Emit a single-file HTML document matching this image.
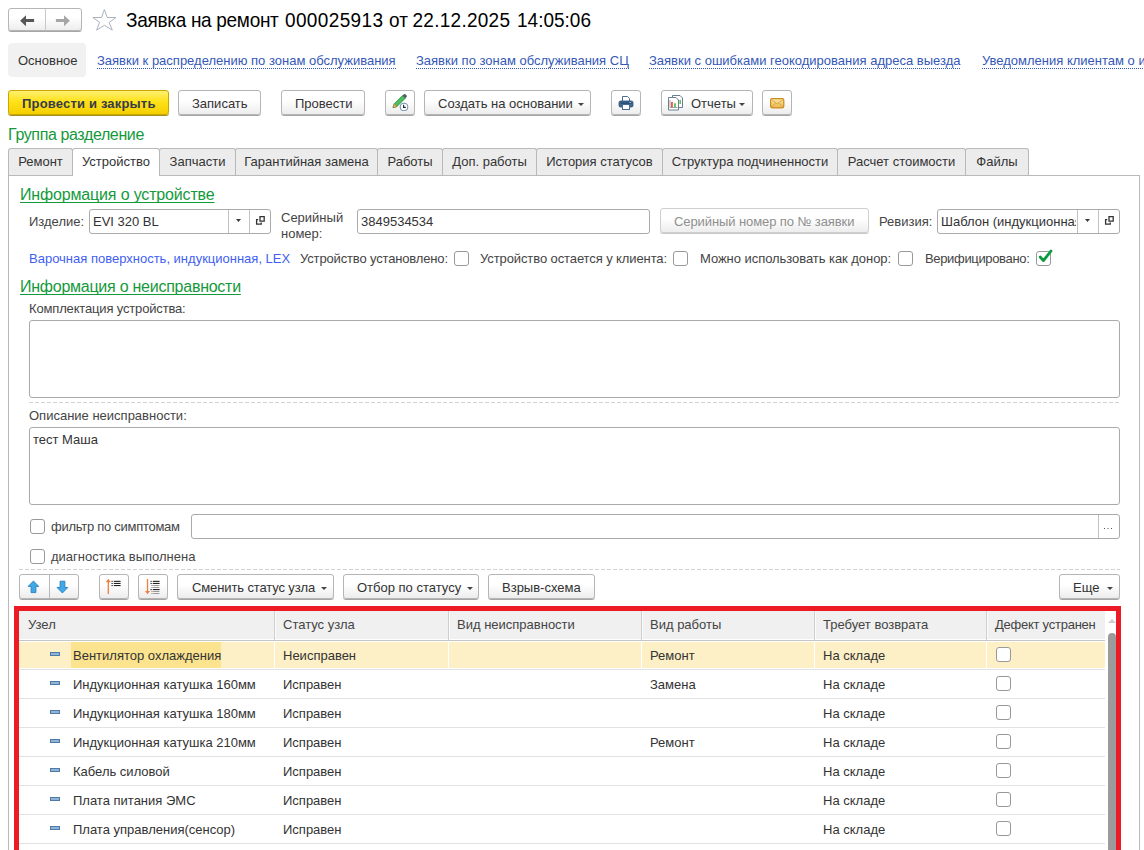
<!DOCTYPE html>
<html><head><meta charset="utf-8">
<style>
*{box-sizing:border-box;margin:0;padding:0}
html,body{width:1144px;height:850px;overflow:hidden;background:#fff}
body{position:relative;font-family:"Liberation Sans",sans-serif;font-size:13px;color:#333}
.a{position:absolute}
.t{position:absolute;white-space:nowrap;line-height:16px}
.btn{position:absolute;height:25px;border:1px solid #b5b5b5;border-radius:3px;background:linear-gradient(#fff 0%,#fff 40%,#ededed 100%);box-shadow:0 1px 0 #a6a6a6}
.lnk{position:absolute;white-space:nowrap;line-height:16px;color:#3558b8;background-image:linear-gradient(to right,#3558b8 50%,transparent 50%);background-size:2px 1px;background-repeat:repeat-x;background-position:0 15px}
.tab{position:absolute;top:148px;height:27px;border:1px solid #b9b9b9;border-bottom:none;background:#ececec;border-radius:3px 3px 0 0;text-align:center;line-height:25px;color:#333;white-space:nowrap}
.tab.on{background:#fff;height:28px;z-index:2}
.inp{position:absolute;border:1px solid #aaa;border-radius:3px;background:#fff;height:25px}
.cb{position:absolute;width:15px;height:15px;border:1px solid #999;border-radius:3px;background:#fff}
.grn{color:#14993b}
.dd{position:absolute;width:0;height:0;border-left:3px solid transparent;border-right:3px solid transparent;border-top:3px solid #444}
.dash{position:absolute;height:1px;background-image:linear-gradient(to right,#d2d2d2 66%,transparent 66%);background-size:6px 1px}
.vl{position:absolute;width:1px;background:#c2c2c2}
</style></head><body>
<div class="btn" style="left:8px;top:8px;width:74px;height:23px"></div>
<div class="vl" style="left:45px;top:9px;height:22px;background:#c8c8c8"></div>
<svg class="a" style="left:19px;top:14px" width="16" height="14" viewBox="0 0 16 14"><path d="M1.1 6.75 L7 1.3 L7 4.9 L15.1 4.9 L15.1 7.9 L7 7.9 L7 12.2 Z" fill="#565656"/></svg>
<svg class="a" style="left:55px;top:14px" width="16" height="14" viewBox="0 0 16 14"><path d="M14.9 6.75 L9 1.3 L9 4.9 L0.9 4.9 L0.9 7.9 L9 7.9 L9 12.2 Z" fill="#a6a6a6"/></svg>
<svg class="a" style="left:92px;top:9px" width="26" height="24" viewBox="0 0 26 24"><path d="M12.4 0.6 L15.3 8.5 L23.9 8.5 L17.2 13.4 L20.3 21.2 L12.4 16.3 L4.6 21.2 L7.6 13.4 L0.9 8.5 L9.5 8.5 Z" fill="none" stroke="#aab3bd" stroke-width="1"/></svg>
<div class="t" style="left:126px;top:10px;font-size:19px;line-height:22px;color:#000;letter-spacing:-0.3px;transform:scaleY(1.07);transform-origin:0 17px">Заявка на ремонт</div>
<div class="t" style="left:285px;top:10px;font-size:19px;line-height:22px;color:#000;letter-spacing:0.37px;transform:scaleY(1.07);transform-origin:0 17px">000025913</div>
<div class="t" style="left:389px;top:10px;font-size:19px;line-height:22px;color:#000;letter-spacing:0px;transform:scaleY(1.07);transform-origin:0 17px">от</div>
<div class="t" style="left:412.5px;top:10px;font-size:19px;line-height:22px;color:#000;letter-spacing:0.27px;transform:scaleY(1.07);transform-origin:0 17px">22.12.2025</div>
<div class="t" style="left:517px;top:10px;font-size:19px;line-height:22px;color:#000;letter-spacing:0px;transform:scaleY(1.07);transform-origin:0 17px">14:05:06</div>
<div class="a" style="left:8px;top:43px;width:78px;height:34px;background:#f1f1f1;border-radius:4px"></div>
<div class="t" style="left:18px;top:53px;color:#333;">Основное</div>
<div class="lnk" style="left:97px;top:53px">Заявки к распределению по зонам обслуживания</div>
<div class="lnk" style="left:416px;top:53px">Заявки по зонам обслуживания СЦ</div>
<div class="lnk" style="left:649px;top:53px">Заявки с ошибками геокодирования адреса выезда</div>
<div class="lnk" style="left:982px;top:53px">Уведомления клиентам о изменении статуса заявки</div>
<div class="btn" style="left:8px;top:90px;width:161px;border-color:#c9a800;background:linear-gradient(#fff070 0%,#ffe21a 45%,#f5cf00 100%);box-shadow:0 1px 0 #a89020"></div>
<div class="t" style="left:22px;top:96px;color:#363b4a;font-weight:bold;letter-spacing:0.18px">Провести и закрыть</div>
<div class="btn" style="left:178px;top:90px;width:83px;"></div>
<div class="t" style="left:192px;top:96px;color:#333;">Записать</div>
<div class="btn" style="left:281px;top:90px;width:84px;"></div>
<div class="t" style="left:295px;top:96px;color:#333;">Провести</div>
<div class="btn" style="left:385px;top:90px;width:30px;"></div>
<svg class="a" style="left:390px;top:93px" width="20" height="18" viewBox="0 0 20 18">
<path d="M3 14.6 L4.3 10.8 L12.6 2.5 L15.3 5.2 L7 13.5 Z" fill="#4cbf5e" stroke="#2f8a3c" stroke-width="0.8"/>
<path d="M12.6 2.5 L13.9 1.2 Q14.6 0.6 15.3 1.2 L16.6 2.5 Q17.2 3.2 16.6 3.9 L15.3 5.2 Z" fill="#4f5b66"/>
<path d="M3 14.6 L4.3 10.8 L7 13.5 Z" fill="#f2c46a" stroke="#8a6a2a" stroke-width="0.6"/>
<circle cx="14" cy="14" r="3.9" fill="#fff" stroke="#6d8fae" stroke-width="1"/>
<path d="M13.6 11.8 V14.4 H15.8" fill="none" stroke="#222" stroke-width="1.1"/>
</svg>
<div class="btn" style="left:424px;top:90px;width:167px;"></div>
<div class="t" style="left:438px;top:96px;color:#333;">Создать на основании</div>
<div class="dd" style="left:578px;top:103px;border-top-color:#444"></div>
<div class="btn" style="left:611px;top:90px;width:30px;"></div>
<svg class="a" style="left:618px;top:95px" width="16" height="16" viewBox="0 0 16 16">
<path d="M4.5 1.5 H9.5 L11.5 3.5 V7 H4.5 Z" fill="#fff" stroke="#4a6d8f" stroke-width="1"/>
<rect x="1" y="6" width="14" height="6" rx="1.5" fill="#3f6a95" stroke="#2d5076" stroke-width="0.8"/>
<rect x="2.5" y="7.6" width="11" height="1" fill="#1f3f60"/>
<rect x="4.5" y="9.5" width="7" height="5" fill="#fff" stroke="#4a6d8f" stroke-width="1"/>
<rect x="11.5" y="7" width="1.2" height="0.8" fill="#fff"/>
</svg>
<div class="btn" style="left:661px;top:90px;width:92px;"></div>
<div class="t" style="left:691px;top:96px;color:#333;">Отчеты</div>
<div class="dd" style="left:739px;top:103px;border-top-color:#444"></div>
<svg class="a" style="left:667px;top:94px" width="18" height="18" viewBox="0 0 18 18">
<path d="M5.5 1.5 H13 L15.5 4 V13.5 H5.5 Z" fill="#fff" stroke="#6a7f93" stroke-width="1"/>
<path d="M1.5 3.5 H9 L11.5 6 V16 H1.5 Z" fill="#fff" stroke="#6a7f93" stroke-width="1"/>
<path d="M3 6 V13.5 H10.5" fill="none" stroke="#666" stroke-width="0.6"/>
<rect x="4.2" y="8" width="1.5" height="5.3" fill="#e8321e"/>
<rect x="7.2" y="9.2" width="1.5" height="4.1" fill="#3db33a"/>
<rect x="12.5" y="6" width="1.3" height="4" fill="#3db33a"/>
</svg>
<div class="btn" style="left:762px;top:90px;width:30px;"></div>
<svg class="a" style="left:770px;top:98px" width="15" height="11" viewBox="0 0 15 11">
<defs><linearGradient id="mg" x1="0" y1="0" x2="0" y2="1"><stop offset="0" stop-color="#fde9a8"/><stop offset="1" stop-color="#eab649"/></linearGradient></defs>
<rect x="0.6" y="0.6" width="13.2" height="9.2" rx="1.5" fill="url(#mg)" stroke="#c98a1e" stroke-width="1.2"/>
<path d="M1.5 1.5 L7.2 6 L13 1.5 M1.5 9.2 L5.5 5.2 M13 9.2 L9 5.2" fill="none" stroke="#d39a3a" stroke-width="0.8"/>
</svg>
<div class="t grn" style="left:8px;top:126px;font-size:16px;line-height:18px;letter-spacing:-0.38px">Группа разделение</div>
<div class="a" style="left:8px;top:175px;width:1132px;height:700px;border:1px solid #b9b9b9"></div>
<div class="tab" style="left:8px;width:65px">Ремонт</div>
<div class="tab on" style="left:72px;width:88px">Устройство</div>
<div class="tab" style="left:159px;width:77px">Запчасти</div>
<div class="tab" style="left:235px;width:143px">Гарантийная замена</div>
<div class="tab" style="left:377px;width:66px">Работы</div>
<div class="tab" style="left:442px;width:95px">Доп. работы</div>
<div class="tab" style="left:536px;width:127px">История статусов</div>
<div class="tab" style="left:662px;width:176px">Структура подчиненности</div>
<div class="tab" style="left:837px;width:129px">Расчет стоимости</div>
<div class="tab" style="left:965px;width:64px">Файлы</div>
<div class="t grn" style="left:20px;top:186px;text-decoration:underline;text-decoration-skip-ink:none;text-underline-offset:2px;font-size:16px;line-height:18px;letter-spacing:-0.16px">Информация о устройстве</div>
<div class="t" style="left:29px;top:214px;color:#444;">Изделие:</div>
<div class="inp" style="left:89px;top:209px;width:182px"></div>
<div class="t" style="left:93px;top:214px;color:#333;width:135px;overflow:hidden">EVI 320 BL</div>
<div class="vl" style="left:228px;top:210px;height:23px"></div>
<div class="vl" style="left:249px;top:210px;height:23px"></div>
<svg class="a" style="left:235px;top:218px" width="7" height="5" viewBox="0 0 7 5"><path d="M1 1 H6 L3.5 4 Z" fill="#3a3a3a"/></svg>
<svg class="a" style="left:255px;top:215px" width="11" height="11" viewBox="0 0 11 11"><path d="M5 1.7 H9.2 V6.2 H5 Z M3.2 4.7 H1.6 V9.2 H6.2 V7.6" fill="none" stroke="#333" stroke-width="1.3"/></svg>
<div class="t" style="left:281px;top:210px;color:#444;">Серийный</div>
<div class="t" style="left:281px;top:226px;color:#444;">номер:</div>
<div class="inp" style="left:357px;top:209px;width:293px"></div>
<div class="t" style="left:361px;top:214px;color:#333;">3849534534</div>
<div class="btn" style="left:660px;top:208px;width:209px;border-color:#cfcfcf;box-shadow:0 1px 0 #c8c8c8"></div>
<div class="t" style="left:674px;top:214px;color:#8f8f8f;letter-spacing:-0.09px">Серийный номер по № заявки</div>
<div class="t" style="left:879px;top:214px;color:#444;">Ревизия:</div>
<div class="inp" style="left:937px;top:209px;width:183px"></div>
<div class="t" style="left:941px;top:214px;color:#333;width:135px;overflow:hidden">Шаблон (индукционная)</div>
<div class="vl" style="left:1077px;top:210px;height:23px"></div>
<div class="vl" style="left:1098px;top:210px;height:23px"></div>
<svg class="a" style="left:1084px;top:218px" width="7" height="5" viewBox="0 0 7 5"><path d="M1 1 H6 L3.5 4 Z" fill="#3a3a3a"/></svg>
<svg class="a" style="left:1104px;top:215px" width="11" height="11" viewBox="0 0 11 11"><path d="M5 1.7 H9.2 V6.2 H5 Z M3.2 4.7 H1.6 V9.2 H6.2 V7.6" fill="none" stroke="#333" stroke-width="1.3"/></svg>
<div class="t" style="left:29px;top:251px;color:#3f5ff0;">Варочная поверхность, индукционная, LEX</div>
<div class="t" style="left:300px;top:251px;color:#444;letter-spacing:-0.15px">Устройство установлено:</div>
<div class="cb" style="left:454px;top:251px"></div>
<div class="t" style="left:480px;top:251px;color:#444;letter-spacing:-0.1px">Устройство остается у клиента:</div>
<div class="cb" style="left:673px;top:251px"></div>
<div class="t" style="left:700px;top:251px;color:#444;letter-spacing:-0.05px">Можно использовать как донор:</div>
<div class="cb" style="left:898px;top:251px"></div>
<div class="t" style="left:925px;top:251px;color:#444;letter-spacing:-0.34px">Верифицировано:</div>
<div class="cb" style="left:1036px;top:251px"></div>
<svg class="a" style="left:1036px;top:247px" width="18" height="18" viewBox="0 0 18 18"><path d="M4.2 10 L7.4 13.6 L15 4" fill="none" stroke="#0c9a3c" stroke-width="2.8" stroke-linecap="round" stroke-linejoin="round"/></svg>
<div class="t grn" style="left:20px;top:278px;text-decoration:underline;text-decoration-skip-ink:none;text-underline-offset:2px;font-size:16px;line-height:18px;letter-spacing:-0.25px">Информация о неисправности</div>
<div class="t" style="left:29px;top:301px;color:#444;letter-spacing:-0.16px">Комплектация устройства:</div>
<div class="inp" style="left:29px;top:320px;width:1091px;height:78px"></div>
<div class="dash" style="left:29px;top:402px;width:1091px"></div>
<div class="t" style="left:29px;top:408px;color:#444;">Описание неисправности:</div>
<div class="inp" style="left:29px;top:427px;width:1091px;height:78px"></div>
<div class="t" style="left:33px;top:432px;color:#333;">тест Маша</div>
<div class="cb" style="left:30px;top:519px"></div>
<div class="t" style="left:51px;top:519px;color:#444;letter-spacing:-0.27px">фильтр по симптомам</div>
<div class="inp" style="left:191px;top:514px;width:929px"></div>
<div class="vl" style="left:1098px;top:515px;height:23px"></div>
<svg class="a" style="left:1104px;top:528px" width="10" height="3" viewBox="0 0 10 3"><rect x="0" y="0" width="1" height="1" fill="#555"/><rect x="3.5" y="0" width="1" height="1" fill="#555"/><rect x="7" y="0" width="1" height="1" fill="#555"/></svg>
<div class="cb" style="left:30px;top:549px"></div>
<div class="t" style="left:51px;top:549px;color:#444;">диагностика выполнена</div>
<div class="dash" style="left:19px;top:569px;width:1101px"></div>
<div class="btn" style="left:19px;top:574px;width:60px;"></div>
<div class="vl" style="left:49px;top:575px;height:24px;background:#b8b8b8"></div>
<svg class="a" style="left:27px;top:580px" width="13" height="14" viewBox="0 0 13 14"><path d="M6.4 1 L11.8 6.4 L8.9 6.4 L8.9 12.6 L4.1 12.6 L4.1 6.4 L1.1 6.4 Z" fill="#41a8e6" stroke="#2a7fc0" stroke-width="0.9"/></svg>
<svg class="a" style="left:56px;top:580px" width="13" height="14" viewBox="0 0 13 14"><path d="M6.4 13 L11.8 7.5 L8.9 7.5 L8.9 1.2 L4.1 1.2 L4.1 7.5 L1.1 7.5 Z" fill="#41a8e6" stroke="#2a7fc0" stroke-width="0.9"/></svg>
<div class="btn" style="left:99px;top:574px;width:30px;"></div>
<svg class="a" style="left:104px;top:577px" width="20" height="19" viewBox="0 0 20 19">
<path d="M4.3 3 V17" stroke="#f07f3c" stroke-width="1.3"/><path d="M1.8 5.2 L4.3 1.8 L6.8 5.2 Z" fill="#f07f3c"/>
<rect x="7.5" y="3.8" width="1.2" height="1.1" fill="#222"/><rect x="9.8" y="3.8" width="6.8" height="1.1" fill="#222"/>
<rect x="7.5" y="5.9" width="1.2" height="1.1" fill="#222"/><rect x="9.8" y="5.9" width="6.8" height="1.1" fill="#222"/>
<rect x="7.5" y="8" width="1.2" height="1.1" fill="#222"/><rect x="9.8" y="8" width="6.8" height="1.1" fill="#222"/>
</svg>
<div class="btn" style="left:138px;top:574px;width:30px;"></div>
<svg class="a" style="left:143px;top:577px" width="20" height="19" viewBox="0 0 20 19">
<path d="M4.5 2 V15.5" stroke="#f07f3c" stroke-width="1.3"/><path d="M2 14 L4.5 17.3 L7 14 Z" fill="#f07f3c"/>
<rect x="7.5" y="3.8" width="1.2" height="1.1" fill="#222"/><rect x="9.8" y="3.8" width="6.8" height="1.1" fill="#222"/>
<rect x="7.5" y="5.9" width="1.2" height="1.1" fill="#222"/><rect x="9.8" y="5.9" width="6.8" height="1.1" fill="#222"/>
<rect x="8.5" y="8" width="1" height="1" fill="#777"/><rect x="10.2" y="8" width="6.2" height="1" fill="#999"/>
<rect x="8.5" y="10" width="1" height="1" fill="#777"/><rect x="10.2" y="10" width="6.2" height="1" fill="#999"/>
<rect x="7.5" y="12" width="1.2" height="1.1" fill="#222"/><rect x="9.8" y="12" width="6.8" height="1.1" fill="#222"/>
<rect x="8.5" y="14" width="1" height="1" fill="#777"/><rect x="10.2" y="14" width="6.2" height="1" fill="#999"/>
<rect x="8.5" y="16" width="1" height="1" fill="#777"/><rect x="10.2" y="16" width="6.2" height="1" fill="#999"/>
</svg>
<div class="btn" style="left:177px;top:574px;width:157px;"></div>
<div class="t" style="left:192px;top:580px;color:#333;letter-spacing:-0.12px">Сменить статус узла</div>
<div class="dd" style="left:321px;top:587px;border-top-color:#444"></div>
<div class="btn" style="left:343px;top:574px;width:136px;"></div>
<div class="t" style="left:357px;top:580px;color:#333;">Отбор по статусу</div>
<div class="dd" style="left:467px;top:587px;border-top-color:#444"></div>
<div class="btn" style="left:488px;top:574px;width:107px;"></div>
<div class="t" style="left:502px;top:580px;color:#333;">Взрыв-схема</div>
<div class="btn" style="left:1059px;top:574px;width:61px;"></div>
<div class="t" style="left:1073px;top:580px;color:#333;">Еще</div>
<div class="dd" style="left:1107px;top:587px;border-top-color:#444"></div>
<div class="a" style="left:14px;top:606px;width:1107px;height:260px;border:5px solid #ed1c24;border-bottom:none"></div>
<div class="a" style="left:19px;top:611px;width:1086px;height:28px;background:#f0f0f0"></div>
<div class="a" style="left:19px;top:640px;width:1086px;height:1px;background:#c6c6c6"></div>
<div class="a" style="left:274px;top:611px;width:1px;height:29px;background:#cfcfcf"></div>
<div class="a" style="left:275px;top:611px;width:1px;height:28px;background:#fafafa"></div>
<div class="a" style="left:448px;top:611px;width:1px;height:29px;background:#cfcfcf"></div>
<div class="a" style="left:449px;top:611px;width:1px;height:28px;background:#fafafa"></div>
<div class="a" style="left:641px;top:611px;width:1px;height:29px;background:#cfcfcf"></div>
<div class="a" style="left:642px;top:611px;width:1px;height:28px;background:#fafafa"></div>
<div class="a" style="left:814px;top:611px;width:1px;height:29px;background:#cfcfcf"></div>
<div class="a" style="left:815px;top:611px;width:1px;height:28px;background:#fafafa"></div>
<div class="a" style="left:986px;top:611px;width:1px;height:29px;background:#cfcfcf"></div>
<div class="a" style="left:987px;top:611px;width:1px;height:28px;background:#fafafa"></div>
<div class="t" style="left:28px;top:617px;color:#444;letter-spacing:0px">Узел</div>
<div class="t" style="left:283px;top:617px;color:#444;letter-spacing:0px">Статус узла</div>
<div class="t" style="left:457px;top:617px;color:#444;letter-spacing:0px">Вид неисправности</div>
<div class="t" style="left:650px;top:617px;color:#444;letter-spacing:0px">Вид работы</div>
<div class="t" style="left:823px;top:617px;color:#444;letter-spacing:0px">Требует возврата</div>
<div class="t" style="left:995px;top:617px;color:#444;letter-spacing:-0.25px">Дефект устранен</div>
<div class="a" style="left:19px;top:642px;width:1086px;height:26px;background:#fdf0c6"></div>
<div class="a" style="left:71px;top:642px;width:150px;height:26px;background:#fce38f"></div>
<div class="a" style="left:274px;top:642px;width:1px;height:26px;background:#fff"></div>
<div class="a" style="left:448px;top:642px;width:1px;height:26px;background:#fff"></div>
<div class="a" style="left:641px;top:642px;width:1px;height:26px;background:#fff"></div>
<div class="a" style="left:814px;top:642px;width:1px;height:26px;background:#fff"></div>
<div class="a" style="left:986px;top:642px;width:1px;height:26px;background:#fff"></div>
<div class="a" style="left:19px;top:669px;width:1086px;height:1px;background:#e2e2e2"></div>
<div class="a" style="left:50px;top:652px;width:10px;height:4px;background:#8fb4d8;border:1px solid #4f7aa5"></div>
<div class="t" style="left:73px;top:648px;color:#333;">Вентилятор охлаждения</div>
<div class="t" style="left:283px;top:648px;color:#333;">Неисправен</div>
<div class="t" style="left:650px;top:648px;color:#333;">Ремонт</div>
<div class="t" style="left:823px;top:648px;color:#333;">На складе</div>
<div class="cb" style="left:996px;top:647px"></div>
<div class="a" style="left:19px;top:698px;width:1086px;height:1px;background:#e2e2e2"></div>
<div class="a" style="left:50px;top:681px;width:10px;height:4px;background:#8fb4d8;border:1px solid #4f7aa5"></div>
<div class="t" style="left:73px;top:677px;color:#333;">Индукционная катушка 160мм</div>
<div class="t" style="left:283px;top:677px;color:#333;">Исправен</div>
<div class="t" style="left:650px;top:677px;color:#333;">Замена</div>
<div class="t" style="left:823px;top:677px;color:#333;">На складе</div>
<div class="cb" style="left:996px;top:676px"></div>
<div class="a" style="left:19px;top:727px;width:1086px;height:1px;background:#e2e2e2"></div>
<div class="a" style="left:50px;top:710px;width:10px;height:4px;background:#8fb4d8;border:1px solid #4f7aa5"></div>
<div class="t" style="left:73px;top:706px;color:#333;">Индукционная катушка 180мм</div>
<div class="t" style="left:283px;top:706px;color:#333;">Исправен</div>
<div class="t" style="left:823px;top:706px;color:#333;">На складе</div>
<div class="cb" style="left:996px;top:705px"></div>
<div class="a" style="left:19px;top:756px;width:1086px;height:1px;background:#e2e2e2"></div>
<div class="a" style="left:50px;top:739px;width:10px;height:4px;background:#8fb4d8;border:1px solid #4f7aa5"></div>
<div class="t" style="left:73px;top:735px;color:#333;">Индукционная катушка 210мм</div>
<div class="t" style="left:283px;top:735px;color:#333;">Исправен</div>
<div class="t" style="left:650px;top:735px;color:#333;">Ремонт</div>
<div class="t" style="left:823px;top:735px;color:#333;">На складе</div>
<div class="cb" style="left:996px;top:734px"></div>
<div class="a" style="left:19px;top:785px;width:1086px;height:1px;background:#e2e2e2"></div>
<div class="a" style="left:50px;top:768px;width:10px;height:4px;background:#8fb4d8;border:1px solid #4f7aa5"></div>
<div class="t" style="left:73px;top:764px;color:#333;">Кабель силовой</div>
<div class="t" style="left:283px;top:764px;color:#333;">Исправен</div>
<div class="t" style="left:823px;top:764px;color:#333;">На складе</div>
<div class="cb" style="left:996px;top:763px"></div>
<div class="a" style="left:19px;top:814px;width:1086px;height:1px;background:#e2e2e2"></div>
<div class="a" style="left:50px;top:797px;width:10px;height:4px;background:#8fb4d8;border:1px solid #4f7aa5"></div>
<div class="t" style="left:73px;top:793px;color:#333;">Плата питания ЭМС</div>
<div class="t" style="left:283px;top:793px;color:#333;">Исправен</div>
<div class="t" style="left:823px;top:793px;color:#333;">На складе</div>
<div class="cb" style="left:996px;top:792px"></div>
<div class="a" style="left:19px;top:843px;width:1086px;height:1px;background:#e2e2e2"></div>
<div class="a" style="left:50px;top:826px;width:10px;height:4px;background:#8fb4d8;border:1px solid #4f7aa5"></div>
<div class="t" style="left:73px;top:822px;color:#333;">Плата управления(сенсор)</div>
<div class="t" style="left:283px;top:822px;color:#333;">Исправен</div>
<div class="t" style="left:823px;top:822px;color:#333;">На складе</div>
<div class="cb" style="left:996px;top:821px"></div>
<div class="a" style="left:1108px;top:619px;width:0;height:0;border-left:4px solid transparent;border-right:4px solid transparent;border-bottom:4px solid #cdcdcd"></div>
<div class="a" style="left:1108px;top:633px;width:8px;height:240px;background:#9b9b9b;border-radius:4px"></div>
</body></html>
